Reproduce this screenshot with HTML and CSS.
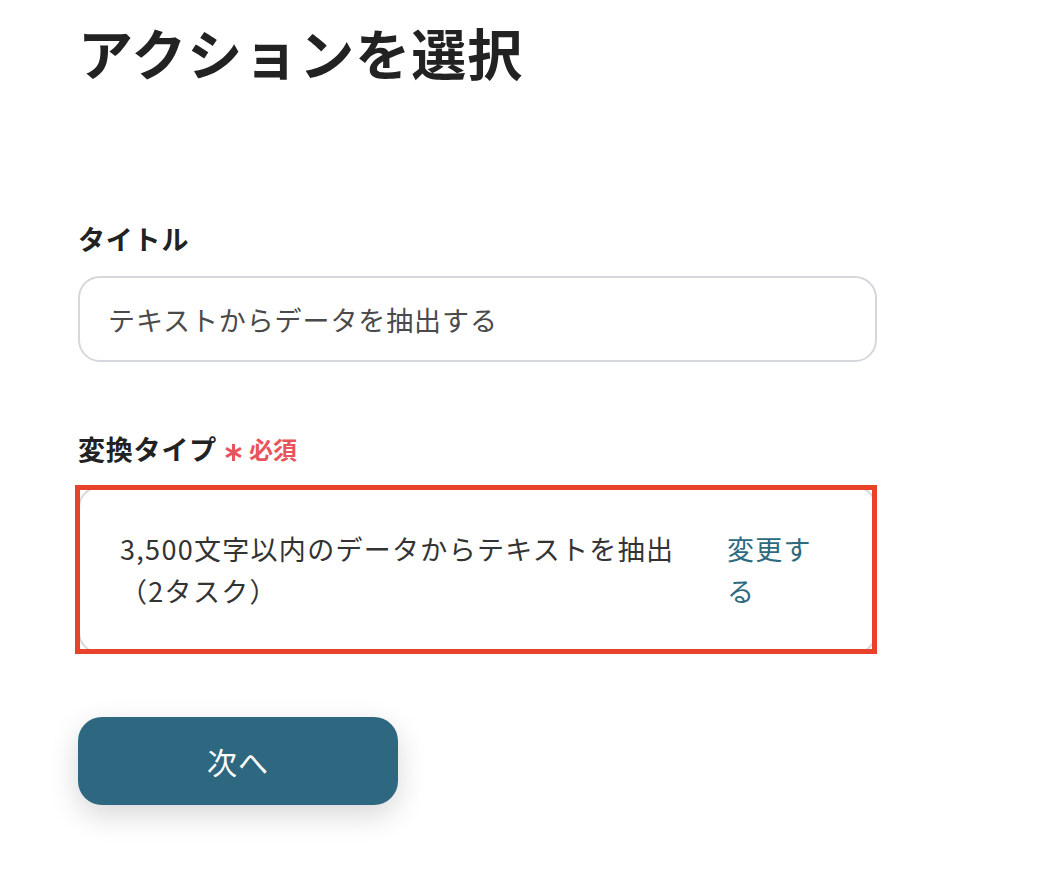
FILE: index.html
```html
<!DOCTYPE html>
<html lang="ja">
<head>
<meta charset="utf-8">
<title>アクションを選択</title>
<link rel="stylesheet" href="styles.css">
</head>
<body>
<main class="page">
  <h1 class="page-title">アクションを選択</h1>

  <section class="field field-title">
    <label class="field-label">タイトル</label>
    <div class="text-input">テキストからデータを抽出する</div>
  </section>

  <section class="field field-type">
    <div class="field-label">変換タイプ<span class="required"><svg class="asterisk" viewBox="0 0 20 20" width="19" height="19" aria-hidden="true"><g stroke="currentColor" stroke-width="3.2" stroke-linecap="butt"><line x1="10" y1="1" x2="10" y2="19"/><line x1="2.2" y1="5.5" x2="17.8" y2="14.5"/><line x1="2.2" y1="14.5" x2="17.8" y2="5.5"/></g></svg>必須</span></div>
    <div class="type-card">
      <div class="type-text">3,500文字以内のデータからテキストを抽出（2タスク）</div>
      <a class="type-change">変更する</a>
    </div>
  </section>

  <button class="next-button">次へ</button>
</main>
</body>
</html>
```

FILE: styles.css
```css
* {
  box-sizing: border-box;
}

html, body {
  margin: 0;
  padding: 0;
  background: #ffffff;
}

body {
  font-family: "Noto Sans CJK JP", "Noto Sans", sans-serif;
  color: #222222;
}

.page {
  padding: 13px 0 60px 78px;
  width: 877px;
  display: flex;
  flex-direction: column;
  align-items: flex-start;
}

.page-title {
  margin: 0;
  font-size: 55px;
  line-height: 77px;
  font-weight: 700;
  color: #222222;
  letter-spacing: 1px;
}

.field {
  width: 799px;
  display: flex;
  flex-direction: column;
  gap: 17px;
}

.field-title {
  margin-top: 129px;
}

.field-type {
  margin-top: 67px;
}

.field-label {
  font-size: 27px;
  line-height: 40px;
  font-weight: 700;
  color: #222222;
  letter-spacing: 0.8px;
  display: flex;
  align-items: center;
}

.required {
  display: inline-flex;
  align-items: center;
  margin-left: 7px;
  font-size: 24px;
  font-weight: 700;
  letter-spacing: 0;
  color: #e8545b;
}

.asterisk {
  display: block;
  margin-right: 6px;
  margin-top: 6px;
}

.text-input {
  width: 799px;
  height: 86px;
  border: 2px solid #d4d8dc;
  border-radius: 22px;
  padding: 0 28px;
  display: flex;
  align-items: center;
  font-size: 27px;
  letter-spacing: 0.9px;
  color: #4a4a4a;
}

.type-card {
  position: relative;
  width: 799px;
  border: 2px solid #d4d8dc;
  border-radius: 22px;
  padding: 40px 60px 40px 40px;
  display: flex;
  gap: 42px;
  font-size: 27px;
  line-height: 42px;
  letter-spacing: 1.3px;
}

.type-card::after {
  content: "";
  position: absolute;
  left: -5px;
  top: -3px;
  right: -2px;
  bottom: -2px;
  border: 5px solid #e8432a;
  pointer-events: none;
}

.type-text {
  flex: 1;
  color: #333333;
}

.type-change {
  width: 88px;
  color: #2d6a80;
  cursor: pointer;
}

.next-button {
  margin-top: 63px;
  width: 320px;
  height: 88px;
  border: none;
  border-radius: 24px;
  background: #2e6780;
  color: #ffffff;
  font-family: "Noto Sans CJK JP", "Noto Sans", sans-serif;
  font-size: 30px;
  letter-spacing: 1px;
  box-shadow: 0 10px 30px rgba(0, 0, 0, 0.16);
  cursor: pointer;
}
```
